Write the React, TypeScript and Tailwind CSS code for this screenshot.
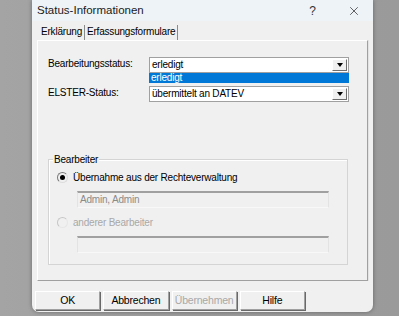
import { X } from "lucide-react";

const font = { fontFamily: '"Liberation Sans", Arial, sans-serif' };

function Combo({ value }: { value: string }) {
  return (
    <div className="flex h-[16px] w-[200px] items-stretch border border-[#a0a0a0] bg-white">
      <div className="flex-1 pl-[2px] text-[10px] leading-[14px] tracking-[-0.2px] text-black">{value}</div>
      <div className="m-[1px] flex w-[15px] items-center justify-center border-t border-l border-r-[#6d6d6d] border-b-[#6d6d6d] border-r border-b border-t-white border-l-white bg-[#f0f0f0]">
        <div className="h-0 w-0 border-x-[3.5px] border-t-[4px] border-x-transparent border-t-black" />
      </div>
    </div>
  );
}

function Radio({ checked, disabled }: { checked?: boolean; disabled?: boolean }) {
  return (
    <div
      className={
        "flex h-[11px] w-[11px] items-center justify-center rounded-full border bg-[#f0f0f0] " +
        (disabled ? "border-[#c6c6c6] border-r-[#e6e6e6] border-b-[#e6e6e6]" : "border-[#7a7a7a] border-r-[#dcdcdc] border-b-[#dcdcdc]")
      }
    >
      {checked && <div className="h-[5px] w-[5px] rounded-full bg-black" />}
    </div>
  );
}

function Field({ value }: { value?: string }) {
  return (
    <div className="h-[17px] w-[252px] border-t-2 border-t-[#a0a0a0] border-x border-b border-x-[#e3e3e3] border-b-[#f8f8f8] bg-[#f0f0f0] pl-[2px] text-[10px] leading-[14px] tracking-[-0.2px] text-[#8a8a8a]">
      {value}
    </div>
  );
}

function Btn({ label, disabled }: { label: string; disabled?: boolean }) {
  return (
    <div
      className={
        "flex h-[19px] items-center justify-center border border-[#a0a0a0] border-t-white border-l-white bg-[#f0f0f0] text-[10.5px] tracking-[-0.2px] shadow-[1px_1px_0_#696969] " +
        (disabled ? "text-[#a8a8a8]" : "text-black")
      }
    >
      {label}
    </div>
  );
}

export default function App() {
  return (
    <div className="flex h-[316px] w-[399px] bg-gradient-to-r from-[#a4a4a4] via-[#9c9c9c] to-[#9a9a9a]" style={font}>
      <div className="ml-[32px] flex h-[312px] w-[341px] flex-col overflow-hidden rounded-b-[7px] bg-[#f0f0f0] shadow-[0_0_4px_rgba(0,0,0,0.35)]">
        {/* title bar */}
        <div className="flex h-[21px] items-center bg-[#eef3f8] pl-[5px] pr-[12px]">
          <span className="flex-1 text-[11.5px] text-[#1b1b1b]">Status-Informationen</span>
          <span className="mr-[31px] text-[12px] text-[#333]">?</span>
          <X size={14} strokeWidth={1.2} className="text-[#222]" />
        </div>

        {/* tabs */}
        <div className="mt-[4px] flex h-[15px] pl-[6px] text-[10px] leading-[14px] tracking-[-0.2px] text-black">
          <div className="border-r border-[#8a8a8a] pl-[3px] pr-[2px]">Erklärung</div>
          <div className="border-r border-[#8a8a8a] pl-[2px] pr-[2px]">Erfassungsformulare</div>
        </div>

        {/* tab panel */}
        <div className="ml-[5px] flex h-[241px] w-[331px] flex-col border border-t-white border-l-white border-b-[#a0a0a0] border-r-[#a0a0a0] pl-[10px] pt-[16px] shadow-[1px_0_0_#e3e3e3]">
          <div className="flex items-start">
            <div className="w-[101px] text-[10px] leading-[14px] tracking-[-0.2px] text-black">Bearbeitungsstatus:</div>
            <div className="flex flex-col">
              <Combo value="erledigt" />
              <div className="h-[10px] w-[200px] bg-[#0078d7] pl-[2px] text-[10px] leading-[10px] tracking-[-0.2px] text-white">erledigt</div>
            </div>
          </div>
          <div className="mt-[3px] flex items-start">
            <div className="w-[101px] text-[10px] leading-[14px] tracking-[-0.2px] text-black">ELSTER-Status:</div>
            <Combo value="übermittelt an DATEV" />
          </div>

          {/* group box */}
          <div className="relative mt-[57px] h-[106px] w-[300px] border border-[#d4d4d4] pl-[8px] pt-[11px] shadow-[inset_1px_1px_0_#fff]">
            <span className="absolute -top-[7px] left-[4px] bg-[#f0f0f0] px-[1px] text-[10px] leading-[13px] tracking-[-0.2px] text-black">Bearbeiter</span>
            <div className="flex items-center gap-[5px]">
              <Radio checked />
              <span className="text-[10px] leading-[13px] tracking-[-0.2px] text-black">Übernahme aus der Rechteverwaltung</span>
            </div>
            <div className="ml-[20px] mt-[7px]">
              <Field value="Admin, Admin" />
            </div>
            <div className="mt-[8px] flex items-center gap-[5px]">
              <Radio disabled />
              <span className="text-[10px] leading-[13px] tracking-[-0.2px] text-[#a8a8a8]">anderer Bearbeiter</span>
            </div>
            <div className="ml-[20px] mt-[7px]">
              <Field />
            </div>
          </div>
        </div>

        {/* buttons */}
        <div className="ml-[3px] mt-[10px] grid w-[270px] grid-cols-4 gap-[3px]">
          <Btn label="OK" />
          <Btn label="Abbrechen" />
          <Btn label="Übernehmen" disabled />
          <Btn label="Hilfe" />
        </div>
      </div>
    </div>
  );
}
